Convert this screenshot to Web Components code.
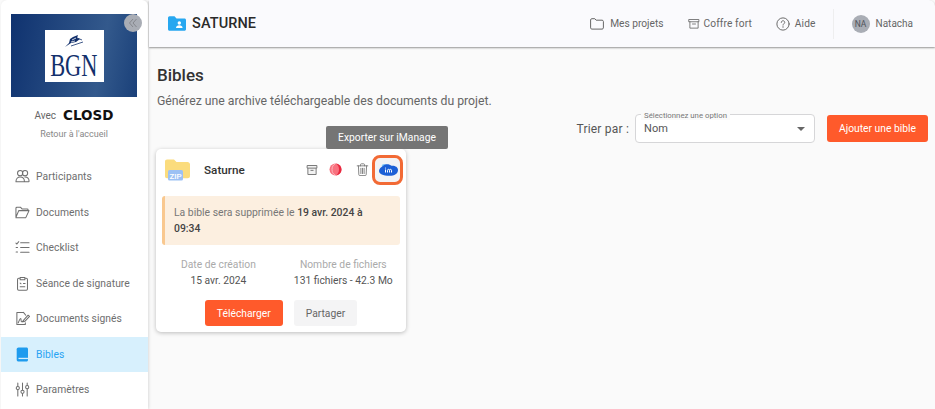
<!DOCTYPE html>
<html lang="fr">
<head>
<meta charset="utf-8">
<title>Bibles</title>
<style>
  html, body { margin: 0; height: 100%; overflow: hidden; }
  body { font-family: Roboto, "Liberation Sans", sans-serif; background: #fafafa; color: #333; }
</style>
</head>
<body>
<app-shell>
  <app-sidebar slot="sidebar">
    <nav-item label="Participants" icon="people"></nav-item>
    <nav-item label="Documents" icon="folder"></nav-item>
    <nav-item label="Checklist" icon="list"></nav-item>
    <nav-item label="Séance de signature" icon="clip"></nav-item>
    <nav-item label="Documents signés" icon="signed"></nav-item>
    <nav-item label="Bibles" icon="book" active></nav-item>
    <nav-item label="Paramètres" icon="sliders"></nav-item>
  </app-sidebar>
  <top-bar slot="top" title="SATURNE">
    <top-link label="Mes projets" icon="folder"></top-link>
    <top-link label="Coffre fort" icon="box"></top-link>
    <top-link label="Aide" icon="help"></top-link>
  </top-bar>
  <bibles-page></bibles-page>
</app-shell>

<script>
const ICONS = {
  people: '<circle cx="5.500" cy="4.500" r="2.800"/><circle cx="10.700" cy="4.500" r="2.800"/><path d="M1 13.500c0-3 1.800-5 4.500-5s4.500 2 4.500 4.500c0 .3-.2.5-.5.5zM10.500 8.500c2.700 0 4.500 2 4.500 4.500 0 .3-.2.5-.5.5H10"/>',
  folder: '<path d="M1 13V3.500C1 3 1.400 2.500 2 2.500h4l1.500 1.700H13c.6 0 1 .4 1 1V6H4L1 13zM1 13.500h10.500L15 6H4"/>',
  list: '<path d="M1 3.300l1 1 2-2.500M1.200 8h1.500M1.200 12.800h1.500M6 3h9M6 8h9M6 13h9"/>',
  clip: '<path d="M5.300 2.500H4c-.8 0-1.300.5-1.300 1.300v10c0 .8.500 1.300 1.300 1.300h8c.8 0 1.300-.5 1.300-1.300v-10c0-.8-.5-1.300-1.300-1.300h-1.300M5.500 1.500h5V4h-5zM5.500 7.500l1 .8M9 8h1.800M5.500 11.500h5"/>',
  signed: '<path d="M9 1.500H2v13h9v-2M9 1.500l2.500 3M3.500 12.500c1-2 1.500-4.500 2.500-4.500s0 3.500 1 3.500 1-1 2-1M9 10l5-5.500 1.500 1.200-5 5.300-2 .6z"/>',
  sliders: '<path d="M3 1v3.500M3 8.500V15M8 1v7.500M8 12.500V15M13 1v2.500M13 7.500V15"/><circle cx="3" cy="6.500" r="1.700"/><circle cx="8" cy="10.500" r="1.700"/><circle cx="13" cy="5.500" r="1.700"/>',
  box: '<path d="M1.500 2h13v3h-13zM2.500 5v8.500h11V5M6 8h4"/>',
  help: '<circle cx="8" cy="8" r="7"/><path d="M6 6.200C6 5 7 4.300 8 4.300s2 .7 2 1.800c0 1.500-2 1.600-2 3.200M8 11v.8"/>',
  trash: '<path d="M1.500 3.500h13M5.500 3.500V2c0-.5.400-1 1-1h3c.6 0 1 .5 1 1v1.500M3 3.500l.5 11c0 .5.400 1 1 1h7c.6 0 1-.5 1-1l.5-11M6 6.500v6.500M8 6.500v6.500M10 6.500v6.500"/>'
};

function icon(name, size, color) {
  return `<svg width="${size}" height="${size}" viewBox="0 0 16 16" fill="none" stroke="${color}" stroke-width="1.100" stroke-linecap="round" stroke-linejoin="round">${ICONS[name]}</svg>`;
}

class AppShell extends HTMLElement {
  constructor() {
    super();
    this.attachShadow({ mode: "open" });
    this.shadowRoot.innerHTML = `
      <style>
        :host { display: flex; height: 409px; gap: 1px; overflow: hidden; }
        .right { flex: 1; min-width: 0; display: flex; flex-direction: column; }
      </style>
      <slot name="sidebar"></slot>
      <div class="right">
        <slot name="top"></slot>
        <slot></slot>
      </div>
    `;
  }
}

class AppSidebar extends HTMLElement {
  constructor() {
    super();
    this.attachShadow({ mode: "open" });
    this.shadowRoot.innerHTML = `
      <style>
        :host {
          display: block; position: relative; width: 147px; margin-left: 1px; padding-top: 14px; box-sizing: border-box;
          background: #fff; border-radius: 6px 6px 0 0; box-shadow: 1px 0 3px rgba(0,0,0,.12);
        }
        .brand {
          width: 126px; height: 83px; margin-left: 10px; display: flex; align-items: center; justify-content: center;
          background: linear-gradient(100deg, #0f326f, #33598c 70%, #1a4079);
        }
        .paper {
          width: 59px; height: 52px; background: #fff; display: flex; flex-direction: column; align-items: center;
          font-family: "Liberation Serif", serif; color: #12306c; font-size: 32px; line-height: 28px; overflow: hidden;
        }
        .paper svg { margin-top: 4px; flex: none; }
        .paper span { transform: scaleX(.7); display: block; margin-top: 3px; }
        .collapse {
          position: absolute; left: 123px; top: 14px; width: 18px; height: 18px; border-radius: 50%;
          background: #a9adb5; display: flex; align-items: center; justify-content: center;
        }
        .avec { display: flex; justify-content: center; align-items: center; gap: 7px; margin-top: 9px; height: 18px; padding-right: 1px; font-size: 10px; color: #666; }
        .closd { font-family: "DejaVu Sans", sans-serif; font-weight: 700; font-size: 13.500px; color: #111; }
        .back { text-align: center; font-size: 9px; color: #888; margin-top: 4px; padding-right: 1px; line-height: 12px; }
        nav { margin-top: 19px; }
      </style>
      <div class="brand">
        <div class="paper">
          <svg width="20" height="14" viewBox="0 0 20 14" fill="none"><path d="M1 13l4-4 1-4 3-2 5-2-1 3 3 1-4 3-5 1z" fill="#12306c"/><path d="M7 12l12-4M11 3l7 3" stroke="#12306c" stroke-width=".8"/><path d="M8 6l4-2M7 8l4-1" stroke="#fff" stroke-width=".8"/></svg>
          <span>BGN</span>
        </div>
      </div>
      <div class="collapse"><svg width="10" height="10" viewBox="0 0 10 10" fill="none" stroke="#85878d" stroke-width="1"><path d="M5 1L1.500 5 5 9M8.500 1L5 5l3.500 4"/></svg></div>
      <div class="avec"><span>Avec</span><span class="closd">CLOSD</span></div>
      <div class="back">Retour à l'accueil</div>
      <nav><slot></slot></nav>
    `;
  }
}

class NavItem extends HTMLElement {
  constructor() {
    super();
    this.attachShadow({ mode: "open" });
  }
  connectedCallback() {
    const name = this.getAttribute("icon");
    const glyph = name === "book"
      ? `<svg width="15" height="15" viewBox="0 0 15 15"><path d="M3.500 .5h8c.8 0 1.500.7 1.500 1.500v11c0 .8-.7 1.500-1.500 1.500h-8c-1 0-1.800-.8-1.800-1.800V2.300C1.700 1.300 2.500 .5 3.500 .5z" fill="#1e9bee"/><path d="M3.500 10.800H13v1.300H3.500z" fill="#d4eefc"/></svg>`
      : icon(name, 15, "#6f6f6f");
    this.shadowRoot.innerHTML = `
      <style>
        :host { display: flex; align-items: center; gap: 6px; height: 35.500px; padding-left: 14px; font-size: 10.300px; color: #6e6e6e; letter-spacing: .05px; }
        :host([active]) { background: #d7f0fd; color: #29a3f3; }
      </style>
      ${glyph}<span>${this.getAttribute("label")}</span>
    `;
  }
}

class TopBar extends HTMLElement {
  constructor() {
    super();
    this.attachShadow({ mode: "open" });
  }
  connectedCallback() {
    this.shadowRoot.innerHTML = `
      <style>
        :host {
          display: flex; align-items: center; height: 47px; flex: none; padding: 0 22px 0 19px;
          background: #fafafd; box-shadow: 0 1px 2px rgba(0,0,0,.4); border-radius: 0 6px 0 0; position: relative; z-index: 1;
        }
        h1 { margin: 0 0 0 6px; font-size: 14.500px; font-weight: 500; color: #2a2a2a; letter-spacing: .1px; }
        .links { margin-left: auto; display: flex; align-items: center; gap: 24px; }
        .line { width: 1px; height: 30px; background: #eeeeef; margin: 0 18px 0 17px; }
        .user { display: flex; align-items: center; gap: 6px; font-size: 10px; color: #666; }
        .avatar { width: 18px; height: 18px; border-radius: 50%; background: #a9adb5; color: #50535a; font-size: 8.500px; display: flex; align-items: center; justify-content: center; }
      </style>
      <svg width="18" height="15" viewBox="0 0 18 15"><path d="M0 2c0-1 .7-1.700 1.500-1.700h5L8.500 2.500h8c.8 0 1.500.7 1.500 1.500v9.300c0 .8-.7 1.500-1.500 1.500h-15C.7 14.800 0 14.100 0 13.300z" fill="#27a7f0"/><circle cx="11.300" cy="7" r="1.700" fill="#fff"/><path d="M8 12c0-2 1.500-2.800 3.300-2.800s3.300.8 3.300 2.800z" fill="#fff"/></svg>
      <h1>${this.getAttribute("title")}</h1>
      <div class="links"><slot></slot></div>
      <div class="line"></div>
      <div class="user"><span class="avatar">NA</span><span>Natacha</span></div>
    `;
  }
}

class TopLink extends HTMLElement {
  constructor() {
    super();
    this.attachShadow({ mode: "open" });
  }
  connectedCallback() {
    const name = this.getAttribute("icon");
    const glyph = name === "folder"
      ? `<svg width="14" height="14" viewBox="0 0 14 14" fill="none" stroke="#666" stroke-width="1"><path d="M.6 3c0-.8.5-1.300 1.200-1.300h3l1.300 1.500h6c.7 0 1.300.5 1.300 1.200v6.500c0 .7-.6 1.200-1.300 1.200H1.800c-.7 0-1.200-.5-1.200-1.200z"/></svg>`
      : icon(name, name === "box" ? 12 : 14, "#666");
    this.shadowRoot.innerHTML = `
      <style>
        :host { display: flex; align-items: center; gap: ${name === "box" ? 4 : name === "folder" ? 6 : 5}px; font-size: 10.200px; color: #666; letter-spacing: ${name === "folder" ? 0 : .1}px; }
      </style>
      ${glyph}<span>${this.getAttribute("label")}</span>
    `;
  }
}

class UiButton extends HTMLElement {
  constructor() {
    super();
    this.attachShadow({ mode: "open" });
    this.shadowRoot.innerHTML = `
      <style>
        :host {
          display: inline-flex; align-items: center; justify-content: center; height: 26px; padding: 0 12px;
          border-radius: 3px; font-size: 10.300px; background: #f4f4f5; color: #666; box-sizing: border-box;
        }
        :host([primary]) { background: #ff5a2b; color: #fff; }
      </style>
      <slot></slot>
    `;
  }
}

class SortSelect extends HTMLElement {
  constructor() {
    super();
    this.attachShadow({ mode: "open" });
    this.shadowRoot.innerHTML = `
      <style>
        :host {
          display: flex; align-items: center; justify-content: space-between; position: relative; box-sizing: border-box;
          width: 180px; height: 29px; padding: 0 9px 0 8px; background: #fff; border: 1px solid #d6d6d8; border-radius: 4px;
          font-size: 11px; color: #555; letter-spacing: .1px;
        }
        label { position: absolute; left: 5px; top: -4px; padding: 0 3px; background: #fafafa; font-size: 7.800px; line-height: 9px; color: #777; letter-spacing: 0; }
        i { width: 0; height: 0; border: 4px solid transparent; border-top: 4.500px solid #666; border-bottom: 0; }
      </style>
      <label>Sélectionnez une option</label>
      <span><slot></slot></span>
      <i></i>
    `;
  }
}

class BibleCard extends HTMLElement {
  constructor() {
    super();
    this.attachShadow({ mode: "open" });
    this.shadowRoot.innerHTML = `
      <style>
        :host {
          display: block; position: relative; width: 250px; height: 183px; box-sizing: border-box; padding: 0 6px;
          background: #fff; border-radius: 5px; box-shadow: 0 1px 4px rgba(0,0,0,.25);
        }
        .head { display: flex; align-items: center; height: 41px; padding-left: 3px; }
        .zip { width: 25px; height: 22px; }
        .name { margin-left: 14px; font-size: 11.700px; font-weight: 500; color: #333; }
        .actions { margin-left: auto; display: flex; align-items: center; }
        .red { margin-left: 11px; }
        .bin { margin: 0 6px 0 14px; display: flex; }
        .imanage {
          width: 25px; height: 24px; display: flex; align-items: center; justify-content: center; padding-left: 2px;
          background: #f3f3f5; border-radius: 5px; outline: 3px solid #f26a35; box-sizing: border-box;
        }
        .notice {
          display: block; margin-top: 6px; height: 49px; box-sizing: border-box; padding: 9px 10px 0 9px; background: #fcefe0;
          border-left: 3px solid #f9c88f; border-radius: 3px; font-size: 10.400px; line-height: 16px; color: #777;
        }
        .notice b { color: #444; font-weight: 500; }
        .meta { display: flex; gap: 38px; padding-left: 19px; margin-top: 12px; text-align: center; font-size: 10.300px; line-height: 16px; color: #aaa; }
        .meta span { display: block; color: #555; }
        .foot { display: flex; justify-content: center; gap: 11px; margin-top: 11px; }
      </style>
      <div class="head">
        <div class="zip">
          <svg width="25" height="22" viewBox="0 0 25 22"><path d="M0 2.500C0 1.200.8.500 2 .500h7l2.500 2.500h11c1.300 0 2.500 1 2.500 2.300V17c0 1.300-1 2.300-2.500 2.300H2c-1.200 0-2-1-2-2.300z" fill="#fbdc7d"/><rect x="3" y="11" width="15" height="10.500" rx="1.500" fill="#9cc1f4"/><text x="10.500" y="19.500" font-family="Roboto, sans-serif" font-size="8" font-weight="500" text-anchor="middle" fill="#fff">ZIP</text></svg>
        </div>
        <div class="name">Saturne</div>
        <div class="actions">
          <svg width="12" height="12" viewBox="0 0 16 16" fill="#f2f2f2" stroke="#777" stroke-width="1.300"><path d="M1.500 2h13v3.500h-13zM2.500 5.500v8.500h11V5.500M6 8.500h4"/></svg>
          <svg class="red" width="13" height="13" viewBox="0 0 13 13"><circle cx="6.500" cy="6.500" r="6" fill="#f9727f"/><path d="M7 .6c3 .5 5.500 2.700 5.500 5.900S10 12 7 12.400c2-1.500 3-3.500 3-5.900S9 2 7 .6z" fill="#e8283f"/><path d="M6 1c-2 1-3 3-3 5.500S4 11 6 12" stroke="#fcb7bd" fill="none"/></svg>
          <span class="bin">${icon("trash", 13, "#777")}</span>
          <div class="imanage">
            <svg width="19" height="12" viewBox="0 0 19 12"><path d="M3 3C2 1 4 -.2 6 .2L8 1z" fill="#7fc4f7"/><path d="M4.500 1.500C7-.5 10.500 0 12.500 1.800c3.500-.3 6.500 1.300 6.500 4.200 0 3.700-3.500 5.800-8.500 5.800C4 11.800 0 10 0 6.800 0 4.500 2.500 3 4.500 1.500z" fill="#1c5fd6"/><path d="M6.500 8.500V5.500M8.500 8.500V6.300c0-1.300 2-1.300 2 0v2.200M10.500 6.300c0-1.300 2-1.300 2 0v2.200" stroke="#fff" stroke-width="1" fill="none"/><circle cx="6.500" cy="4" r=".6" fill="#fff"/></svg>
          </div>
        </div>
      </div>
      <div class="notice">La bible sera supprimée le <b>19 avr. 2024 à</b><br><b>09:34</b></div>
      <div class="meta">
        <div>Date de création<span>15 avr. 2024</span></div>
        <div>Nombre de fichiers<span>131 fichiers - 42.3 Mo</span></div>
      </div>
      <div class="foot">
        <ui-button primary>Télécharger</ui-button>
        <ui-button>Partager</ui-button>
      </div>
    `;
  }
}

class BiblesPage extends HTMLElement {
  constructor() {
    super();
    this.attachShadow({ mode: "open" });
    this.shadowRoot.innerHTML = `
      <style>
        :host { display: block; position: relative; padding: 18px 7px 0 8px; }
        h2 { margin: 0; font-size: 17px; line-height: 20px; font-weight: 500; color: #333; }
        p { margin: 9px 0 0; font-size: 12.250px; line-height: 15px; color: #666; }
        .sort { display: flex; justify-content: flex-end; align-items: center; margin-top: 5px; height: 29px; color: #555; font-size: 12px; letter-spacing: .2px; }
        .sort sort-select { margin: 0 12px 0 6px; }
        .sort ui-button { width: 101px; height: 27px; padding: 0; letter-spacing: 0; }
        bible-card { margin: 6px 0 0 -1px; }
        .tip {
          position: absolute; left: 177px; top: 79px; width: 122px; height: 23px; background: #757575; color: #fff;
          border-radius: 2px; font-size: 10.300px; display: flex; align-items: center; justify-content: center; z-index: 2;
        }
      </style>
      <h2>Bibles</h2>
      <p>Générez une archive téléchargeable des documents du projet.</p>
      <div class="sort">
        <span>Trier par :</span>
        <sort-select>Nom</sort-select>
        <ui-button primary>Ajouter une bible</ui-button>
      </div>
      <bible-card></bible-card>
      <div class="tip">Exporter sur iManage</div>
    `;
  }
}

customElements.define("app-shell", AppShell);
customElements.define("app-sidebar", AppSidebar);
customElements.define("nav-item", NavItem);
customElements.define("top-bar", TopBar);
customElements.define("top-link", TopLink);
customElements.define("ui-button", UiButton);
customElements.define("sort-select", SortSelect);
customElements.define("bible-card", BibleCard);
customElements.define("bibles-page", BiblesPage);
</script>
</body>
</html>
